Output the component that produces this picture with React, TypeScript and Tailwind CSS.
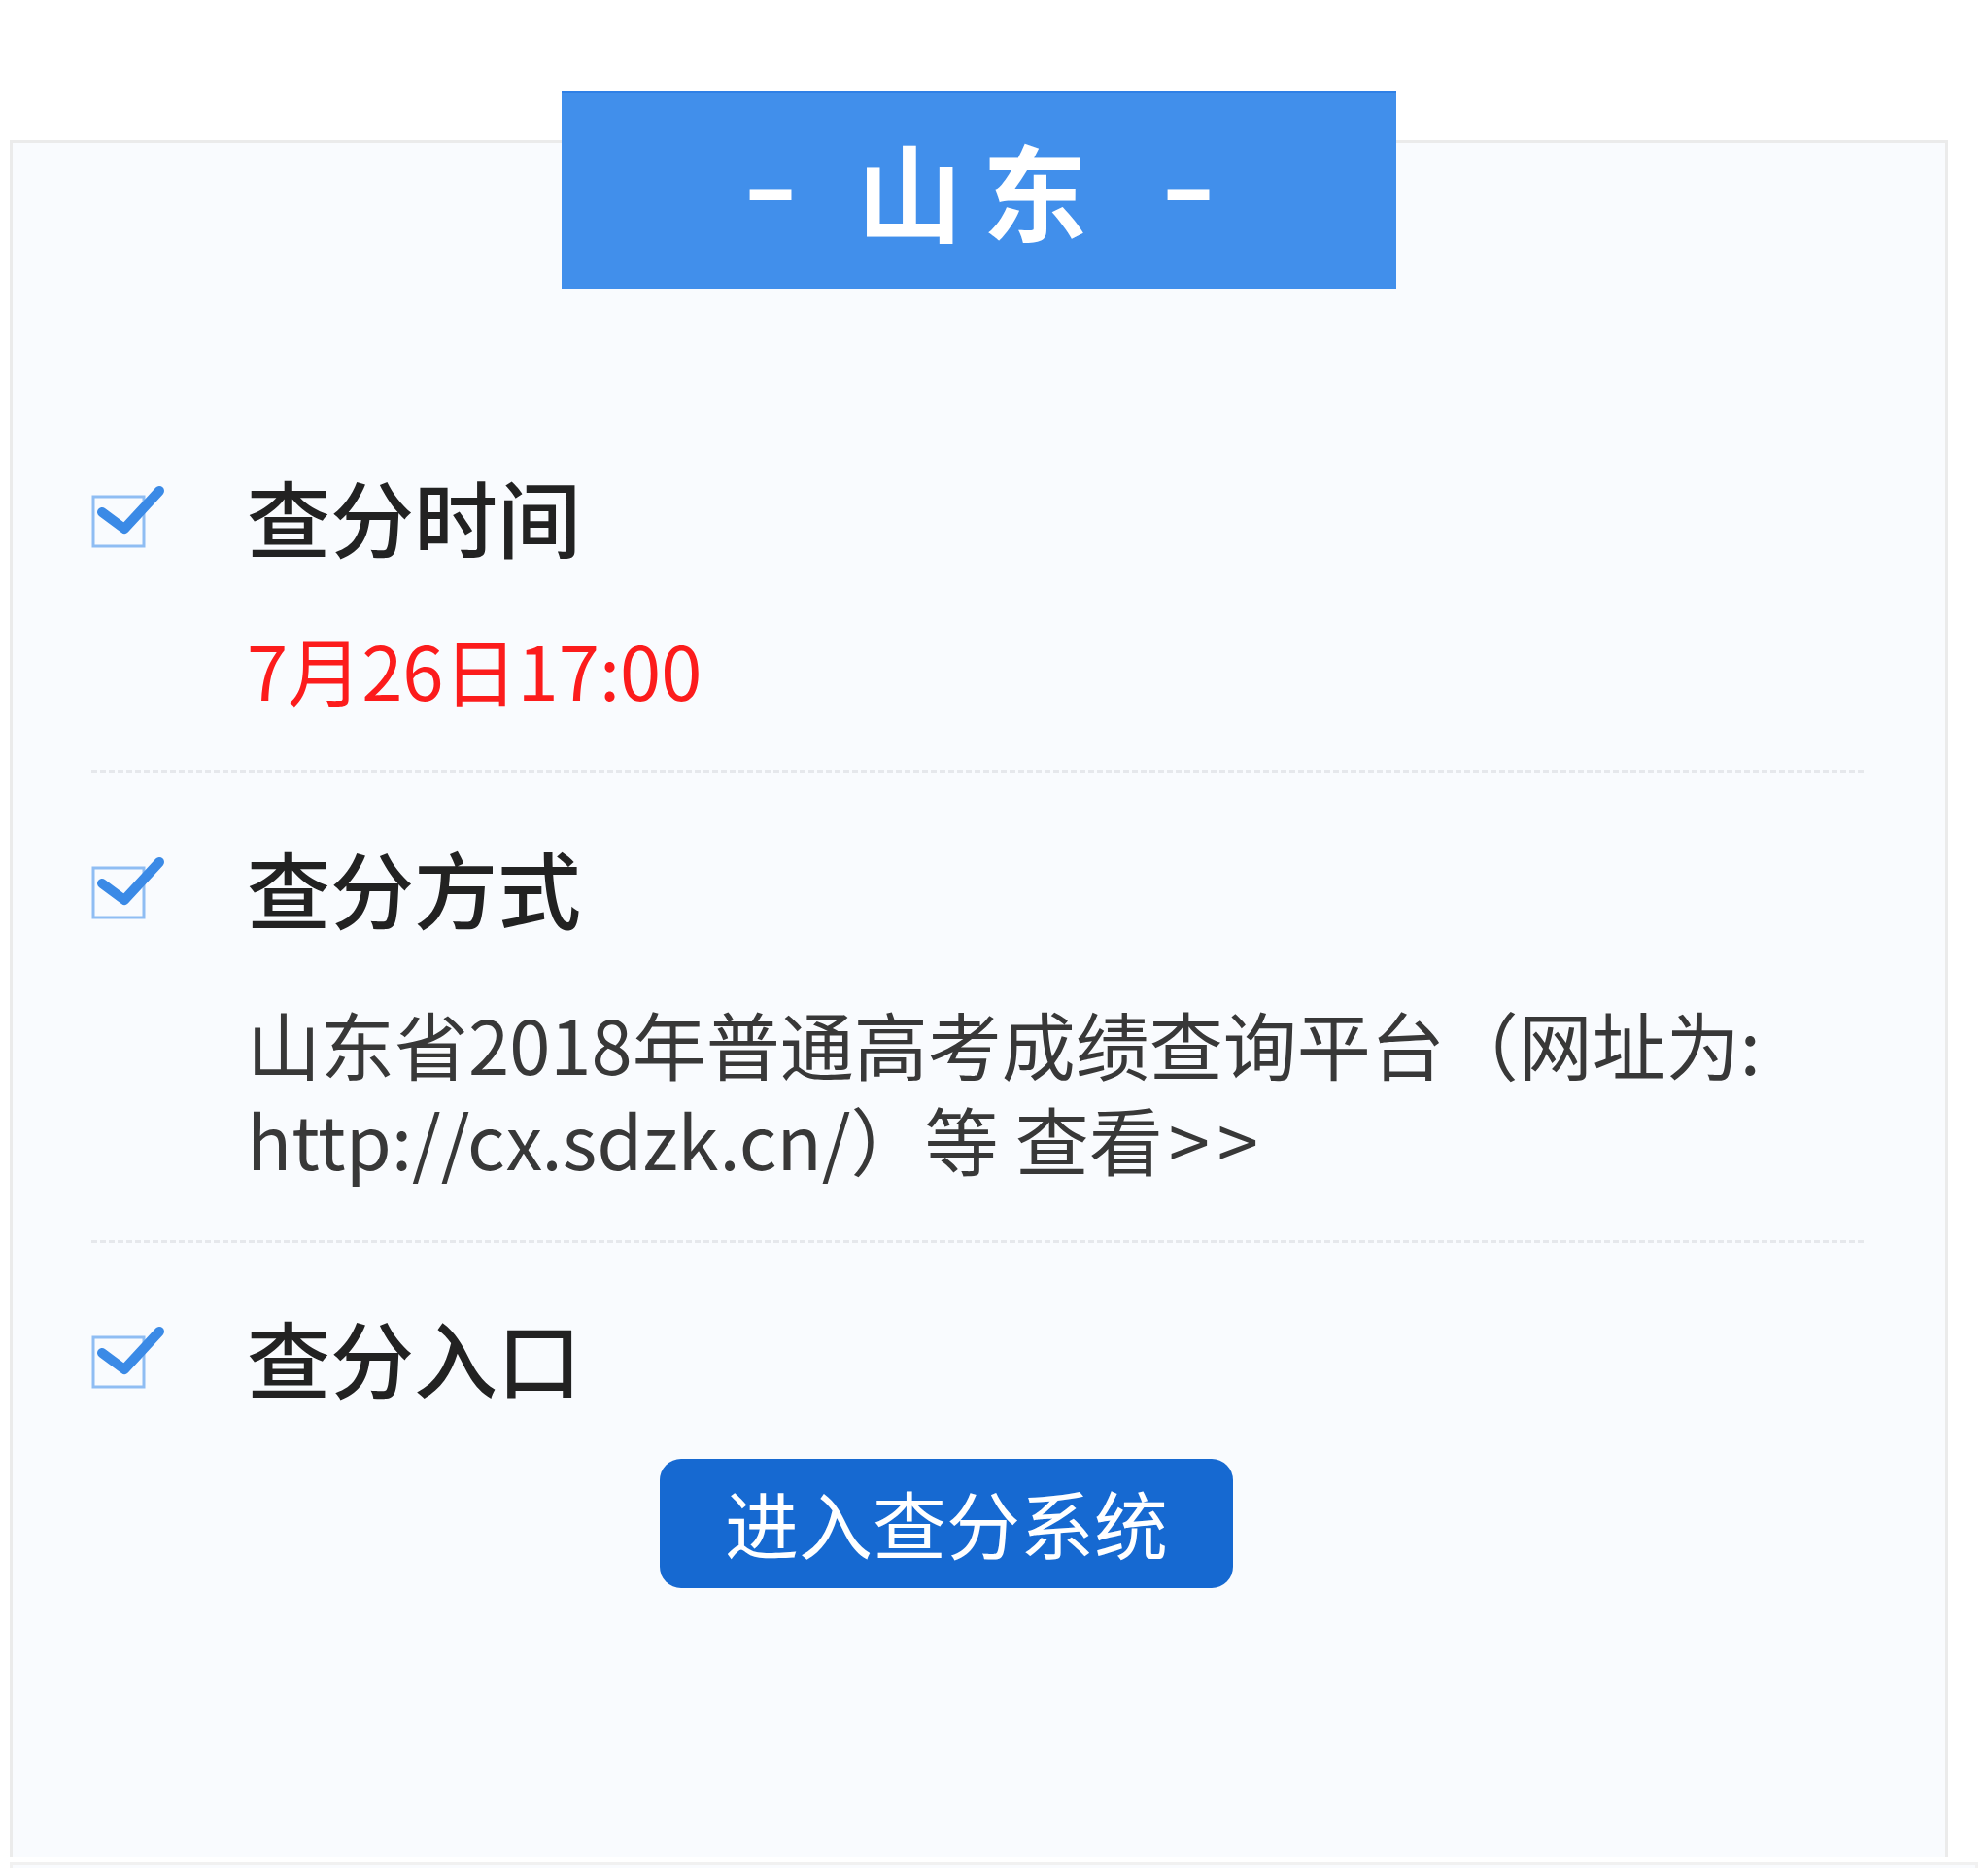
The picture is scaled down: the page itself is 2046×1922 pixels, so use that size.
import React from "react";

const font = { fontFamily: '"Noto Sans CJK SC", "Noto Sans", sans-serif' };

function CheckIcon() {
  return (
    <svg width="75" height="66" viewBox="0 0 75 66" fill="none">
      <rect x="2" y="13" width="52" height="51" stroke="#8fbdf3" strokeWidth="3" />
      <path
        d="M11 29 L34 46 L70 7"
        stroke="#3b8ae6"
        strokeWidth="10"
        strokeLinecap="round"
        strokeLinejoin="round"
      />
    </svg>
  );
}

function Heading({ children }: { children: React.ReactNode }) {
  return (
    <div className="flex items-center h-[120px]">
      <div className="w-[160px] shrink-0 flex items-center">
        <CheckIcon />
      </div>
      <h2 className="text-[86px] leading-[120px] font-medium text-[#222]">{children}</h2>
    </div>
  );
}

export default function App() {
  return (
    <div className="w-[2046px] h-[1922px] bg-white overflow-hidden pt-[94px] px-[10px]" style={font}>
      {/* title tab */}
      <div className="relative z-10 pl-[568px]">
        <div className="w-[859px] h-[203px] bg-[#418feb] border-t-[2px] border-[#2f80e6] flex items-center pl-[192px] text-white font-bold text-[108px] leading-none pb-[6px]">
          <span className="w-[46px] text-center inline-block scale-x-[1.45] -translate-y-[10px]">-</span>
          <span className="ml-[66px] w-[108px] text-center">山</span>
          <span className="ml-[21px] w-[108px] text-center">东</span>
          <span className="ml-[81px] w-[46px] text-center inline-block scale-x-[1.45] -translate-y-[10px]">-</span>
        </div>
      </div>

      {/* card */}
      <div className="-mt-[153px] w-[1995px] h-[1767px] bg-[#f9fbfe] border-x-[3px] border-t-[3px] border-[#ebebeb] pl-[81px] pr-[84px] pt-[324px]">
        <section className="pb-[54px] border-b-[3px] border-dashed border-[#e6e8ec]">
          <Heading>查分时间</Heading>
          <p className="pl-[160px] mt-[47px] text-[76px] leading-[100px] text-[#fc1c1c]">7月26日17:00</p>
        </section>

        <section className="pt-[58px] pb-[56px] border-b-[3px] border-dashed border-[#e6e8ec]">
          <Heading>查分方式</Heading>
          <p className="pl-[160px] mt-[51px] text-[76px] leading-[98px] text-[#383838] whitespace-nowrap">
            山东省2018年普通高考成绩查询平台（网址为:
            <br />
            http://cx.sdzk.cn/）等 查看<span className="tracking-[8px] ml-[6px]">&gt;&gt;</span>
          </p>
        </section>

        <section className="pt-[57px]">
          <Heading>查分入口</Heading>
          <div className="mt-[45px] flex justify-center pr-[64px]">
            <button className="w-[590px] h-[133px] rounded-[22px] bg-[#1669d1] text-white text-[76px] leading-none pb-[4px]">
              进入查分系统
            </button>
          </div>
        </section>
      </div>

      <div className="mt-[5px] h-[40px] bg-[#f9fbfe] border-x-[3px] border-t-[3px] border-[#f1f1f1]" />
    </div>
  );
}
